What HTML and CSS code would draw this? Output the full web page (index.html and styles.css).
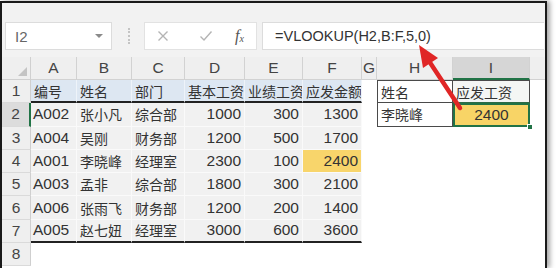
FILE: index.html
```html
<!DOCTYPE html>
<html lang="zh-CN">
<head>
<meta charset="utf-8">
<link rel="stylesheet" href="styles.css">
</head>
<body>
<div class="win">
  <div class="toolbar">
    <div class="namebox"><span class="nb-text">I2</span><span class="nb-arrow"></span></div>
    <div class="dots"></div>
    <div class="fxbox">
      <svg class="ic" width="12" height="12" viewBox="0 0 12 12"><path d="M1.5 1.5 L10.5 10.5 M10.5 1.5 L1.5 10.5" stroke="#b4b4b4" stroke-width="1.4" fill="none"/></svg>
      <svg class="ic" width="14" height="12" viewBox="0 0 14 12"><path d="M1.5 6.5 L5 10 L12.5 1.5" stroke="#b4b4b4" stroke-width="1.4" fill="none"/></svg>
      <span class="fx">f<sub>x</sub></span>
    </div>
    <div class="formula">=VLOOKUP(H2,B:F,5,0)</div>
  </div>
  <div class="grid">
    <div class="c corner"><span class="tri"></span></div>
    <div class="c ch">A</div><div class="c ch">B</div><div class="c ch">C</div><div class="c ch">D</div><div class="c ch">E</div><div class="c ch">F</div><div class="c ch">G</div><div class="c ch">H</div><div class="c ch chsel">I</div><div class="c chfill"></div>

    <div class="c rh">1</div>
    <div class="c th zh">编号</div><div class="c th zh">姓名</div><div class="c th zh">部门</div><div class="c th zh">基本工资</div><div class="c th zh">业绩工资</div><div class="c th zh">应发金额</div>
    <div class="c e"></div><div class="c bx h1 zh">姓名</div><div class="c bx i1 zh">应发工资</div><div class="c e"></div>

    <div class="c rh rhsel">2</div>
    <div class="c td">A002</div><div class="c td zh">张小凡</div><div class="c td zh">综合部</div><div class="c td r">1000</div><div class="c td r">300</div><div class="c td r">1300</div>
    <div class="c e"></div><div class="c bx h2 zh">李晓峰</div><div class="c i2">2400<span class="handle"></span></div><div class="c e"></div>

    <div class="c rh">3</div>
    <div class="c td">A004</div><div class="c td zh">吴刚</div><div class="c td zh">财务部</div><div class="c td r">1200</div><div class="c td r">500</div><div class="c td r">1700</div>
    <div class="c e"></div><div class="c e"></div><div class="c e"></div><div class="c e"></div>

    <div class="c rh">4</div>
    <div class="c td">A001</div><div class="c td zh">李晓峰</div><div class="c td zh">经理室</div><div class="c td r">2300</div><div class="c td r">100</div><div class="c td r y">2400</div>
    <div class="c e"></div><div class="c e"></div><div class="c e"></div><div class="c e"></div>

    <div class="c rh">5</div>
    <div class="c td">A003</div><div class="c td zh">孟非</div><div class="c td zh">综合部</div><div class="c td r">1800</div><div class="c td r">300</div><div class="c td r">2100</div>
    <div class="c e"></div><div class="c e"></div><div class="c e"></div><div class="c e"></div>

    <div class="c rh">6</div>
    <div class="c td">A006</div><div class="c td zh">张雨飞</div><div class="c td zh">财务部</div><div class="c td r">1200</div><div class="c td r">200</div><div class="c td r">1400</div>
    <div class="c e"></div><div class="c e"></div><div class="c e"></div><div class="c e"></div>

    <div class="c rh">7</div>
    <div class="c td last">A005</div><div class="c td last zh">赵七妞</div><div class="c td last zh">经理室</div><div class="c td r last">3000</div><div class="c td r last">600</div><div class="c td r last">3600</div>
    <div class="c e"></div><div class="c e"></div><div class="c e"></div><div class="c e"></div>

    <div class="c rh">8</div>
    <div class="c e"></div><div class="c e"></div><div class="c e"></div><div class="c e"></div><div class="c e"></div><div class="c e"></div>
    <div class="c e"></div><div class="c e"></div><div class="c e"></div><div class="c e"></div>
  </div>
  <svg class="arrow" width="557" height="268" viewBox="0 0 557 268">
    <line x1="460" y1="108" x2="427" y2="58" stroke="#e02626" stroke-width="4.5" stroke-linecap="round"/>
    <polygon points="419,45 438,58 423,68" fill="#e02626"/>
  </svg>
</div>
</body>
</html>
```
FILE: styles.css
```css
* { box-sizing: border-box; }
html, body { margin: 0; padding: 0; background: #fff; }
body { padding-top: 1px; font-family: "Liberation Sans", "Noto Sans CJK SC", sans-serif; color: #333; }

.win {
  position: relative;
  width: 547px;
  height: 267px;
  border: 2px solid #1a1a1a;
  border-bottom: none;
  box-shadow: 3px 0 5px rgba(0,0,0,0.35);
  background: #fff;
  overflow: hidden;
}

.toolbar {
  height: 54px;
  background: #f2f2f2;
  display: flex;
  align-items: flex-start;
  padding-top: 19px;
  padding-left: 3px;
}
.namebox {
  width: 107px;
  height: 28px;
  background: #fff;
  border: 1px solid #dcdcdc;
  display: flex;
  align-items: center;
  justify-content: space-between;
  padding: 0 8px 0 9px;
}
.nb-text { font-size: 15px; color: #666; }
.nb-arrow {
  width: 0; height: 0;
  border-left: 4px solid transparent;
  border-right: 4px solid transparent;
  border-top: 4px solid #8a8a8a;
}
.dots {
  width: 2px;
  height: 16px;
  margin: 6px 14px 0 16px;
  border-left: 2px dotted #c4c4c4;
}
.fxbox {
  width: 113px;
  height: 28px;
  background: #fff;
  border: 1px solid #e2e2e2;
  display: flex;
  align-items: center;
  padding-left: 12px;
}
.ic:nth-child(1) { margin-right: 30px; }
.ic:nth-child(2) { margin-right: 22px; }
.fx {
  font-family: "Liberation Serif", serif;
  font-style: italic;
  font-size: 16px;
  color: #555;
}
.fx sub { font-size: 10px; vertical-align: -1px; }
.formula {
  width: 282px;
  height: 28px;
  margin-left: 5px;
  background: #fff;
  border: 1px solid #dcdcdc;
  border-right: none;
  display: flex;
  align-items: center;
  padding-left: 12px;
  font-size: 14.5px;
  color: #333;
}

.grid {
  display: grid;
  grid-template-columns: 29px 46px 55px 53px 60px 58px 59px 15px 76px 77px 1fr;
  grid-template-rows: 23px repeat(8, 23.3px);
}
.c {
  display: flex;
  align-items: center;
  font-size: 15.5px;
  white-space: nowrap;
  overflow: hidden;
  padding: 0 2px;
}
.zh { font-size: 14px; padding-left: 3px; }
.corner {
  background: #efefef;
  border-right: 1px solid #d0d0d0;
  border-bottom: 1px solid #d0d0d0;
  position: relative;
}
.tri {
  position: absolute;
  right: 3px; bottom: 3px;
  width: 0; height: 0;
  border-left: 9px solid transparent;
  border-bottom: 9px solid #c4c4c4;
}
.ch {
  background: #efefef;
  justify-content: center;
  color: #444;
  border-right: 1px solid #d2d2d2;
  border-bottom: 1px solid #d2d2d2;
}
.chsel {
  background: #d6d6d6;
  border-bottom: 2px solid #217346;
}
.chfill { background: #efefef; border-bottom: 1px solid #d2d2d2; }
.rh {
  background: #efefef;
  justify-content: center;
  color: #444;
  border-right: 1px solid #cfcfcf;
  border-bottom: 1px solid #dadada;
}
.rhsel {
  background: #dcdcdc;
  border-right: 2px solid #217346;
}
.th {
  background: #dde7f2;
  border-right: 1px solid #eef3f9;
  border-bottom: 2px solid #222;
}
.td {
  background: #f1f1f1;
  border-right: 1px solid #fafafa;
  border-bottom: 1px solid #fafafa;
}
.td.last { border-bottom: 2px solid #222; }
.r { justify-content: flex-end; padding-right: 3px; }
.y { background: #f8d56b; }
.e { background: #fff; }
.bx { border-bottom: 1px solid #4a4a4a; border-right: 1px solid #4a4a4a; }
.h1 { border-top: 1px solid #4a4a4a; border-left: 1px solid #4a4a4a; }
.i1 { border-top: 1px solid #4a4a4a; background: #f4f6f4; border-bottom: 1px solid #2f6b45; }
.h2 { border-left: 1px solid #4a4a4a; }
.i2 {
  position: relative;
  overflow: visible;
  background: #f8d466;
  border: 2px solid #217346;
  justify-content: center;
}
.handle {
  position: absolute;
  right: -5px; bottom: -5px;
  width: 6px; height: 6px;
  background: #217346;
  border: 1px solid #fff;
}
.arrow {
  position: absolute;
  left: -2px; top: -3px;
  pointer-events: none;
}
```
